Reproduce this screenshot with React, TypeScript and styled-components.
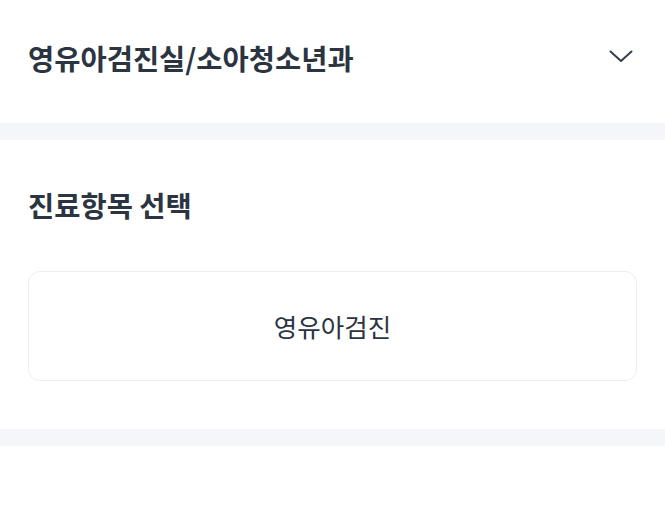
import styled, { createGlobalStyle } from 'styled-components';

const GlobalStyle = createGlobalStyle`
  html, body {
    margin: 0;
    padding: 0;
    background: #fff;
  }
  body {
    font-family: "Noto Sans CJK KR", "Noto Sans", sans-serif;
    color: #2b3441;
  }
`;

const Page = styled.div`
  display: flex;
  flex-direction: column;
  width: 665px;
  min-height: 531px;
  background: #fff;
`;

const Header = styled.header`
  height: 123px;
  display: flex;
  align-items: center;
  justify-content: space-between;
  padding: 0 28px;
  box-sizing: border-box;

  h1 {
    margin: 0;
    font-size: 28.5px;
    font-weight: 700;
    color: #2b3441;
    line-height: 38px;
    padding-bottom: 8px;
  }
`;

const ChevronButton = styled.button`
  border: none;
  background: none;
  padding: 0 4px 12px 0;
  display: flex;
  align-items: center;
  justify-content: center;
  cursor: pointer;
`;

const Divider = styled.div`
  height: 17px;
  background: #f4f6f9;
`;

const Section = styled.section`
  display: flex;
  flex-direction: column;
  padding: 46px 28px 48px;

  h2 {
    margin: 0 0 47px;
    font-size: 28.5px;
    font-weight: 700;
    line-height: 38px;
    color: #2b3441;
  }
`;

const OptionCard = styled.button`
  box-sizing: border-box;
  height: 110px;
  border: 1.5px solid #ebedf0;
  border-radius: 12px;
  background: #fff;
  display: flex;
  align-items: center;
  justify-content: center;
  font-family: inherit;
  font-size: 25.5px;
  font-weight: 400;
  color: #2b3441;
  cursor: pointer;
  padding: 0 0 2px;
`;

const App = () => {
  return (
    <>
      <GlobalStyle />
      <Page>
        <Header>
          <h1>영유아검진실/소아청소년과</h1>
          <ChevronButton aria-label="펼치기">
            <svg width="24" height="16" viewBox="0 0 24 16" fill="none">
              <path d="M1.5 3.5 L12 13 L22.5 3.5" stroke="#333d4b" strokeWidth="2" strokeLinecap="round" strokeLinejoin="round" />
            </svg>
          </ChevronButton>
        </Header>
        <Divider />
        <Section>
          <h2>진료항목 선택</h2>
          <OptionCard>영유아검진</OptionCard>
        </Section>
        <Divider />
      </Page>
    </>
  );
};

export default App;
